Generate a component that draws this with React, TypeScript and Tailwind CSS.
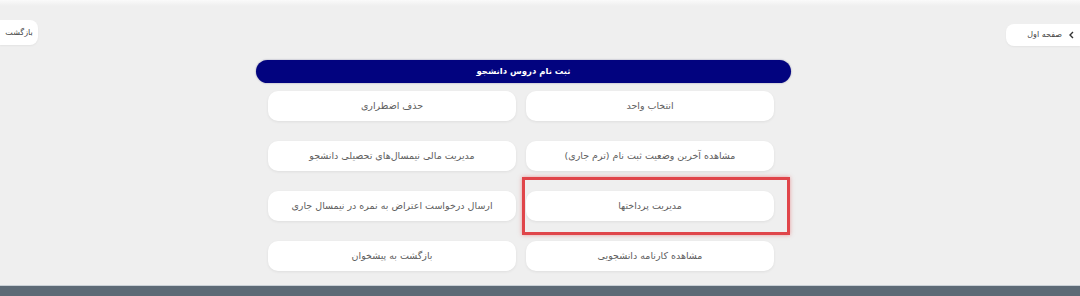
import React from "react";

const items = [
  "انتخاب واحد",
  "حذف اضطراری",
  "مشاهده آخرین وضعیت ثبت نام (ترم جاری)",
  "مدیریت مالی نیمسال‌های تحصیلی دانشجو",
  "مدیریت پرداختها",
  "ارسال درخواست اعتراض به نمره در نیمسال جاری",
  "مشاهده کارنامه دانشجویی",
  "بازگشت به پیشخوان",
];

export default function App() {
  return (
    <div
      className="w-[1080px] h-[296px] bg-[#efefef] flex flex-col overflow-hidden"
      style={{ fontFamily: '"DejaVu Sans", "Noto Sans", sans-serif' }}
    >
      <div className="h-[6px] bg-gradient-to-b from-[#fafafa] to-[#efefef]" />
      <div className="flex justify-between items-start">
        <div className="mt-[14px] h-[25px] w-[38px] bg-white rounded-r-[8px] flex items-center justify-center text-[8px] text-[#444] shadow-[0_1px_2px_rgba(0,0,0,0.05)]" dir="rtl">
          بازگشت
        </div>
        <div className="mt-[18px] h-[22px] w-[74px] bg-white rounded-l-[8px] flex items-center justify-start gap-[6px] pr-[5px] text-[8px] text-[#444] shadow-[0_1px_2px_rgba(0,0,0,0.05)]" dir="rtl">
          <svg width="7" height="8" viewBox="0 0 7 8" fill="none" stroke="#333" strokeWidth="1.4">
            <path d="M5 1 L2 4 L5 7" />
          </svg>
          <span>صفحه اول</span>
        </div>
      </div>
      <div className="ml-[256px] w-[535px] mt-[14px]">
        <div className="h-[23px] rounded-full bg-[#02037f] flex items-center justify-center text-white text-[8.5px] font-bold shadow-[0_0_2px_rgba(0,0,80,0.4)]" dir="rtl">
          ثبت نام دروس دانشجو
        </div>
        <div dir="rtl" className="grid grid-cols-2 gap-x-[10px] gap-y-[20px] pr-[17px] pl-[12px] mt-[8px]">
          {items.map((t, i) => (
            <div key={i} className="relative">
              <div className="h-[30px] bg-white rounded-[10px] flex items-center justify-center text-[9.5px] text-[#5e5e5e] shadow-[0_1px_3px_rgba(0,0,0,0.07)]">
                {t}
              </div>
              {i === 4 && (
                <div className="absolute -top-[14px] -bottom-[14px] -right-[16px] -left-[4px] border-[3px] border-[#e0454a] shadow-[0_0_4px_rgba(224,69,74,0.5)] pointer-events-none" />
              )}
            </div>
          ))}
        </div>
      </div>
      <div className="flex-1" />
      <div className="h-[1px] bg-[#c9d0d6]" />
      <div className="h-[10px] bg-[#5d6a76]" />
    </div>
  );
}
